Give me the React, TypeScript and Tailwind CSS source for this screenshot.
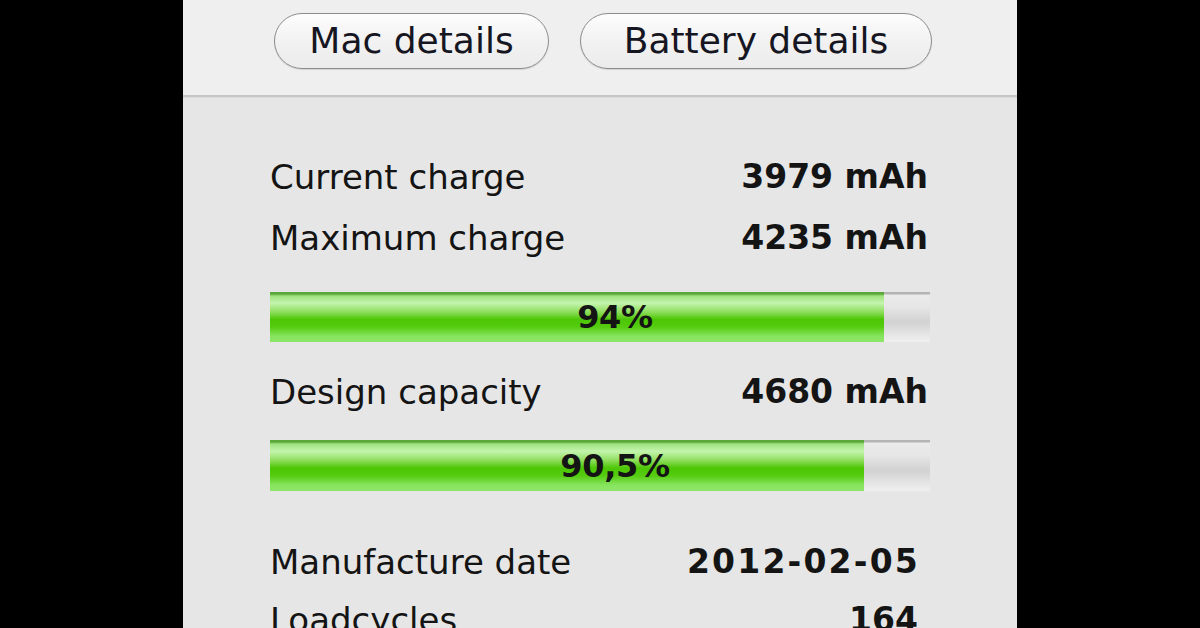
import React from "react";

const font = { fontFamily: '"DejaVu Sans", "Liberation Sans", sans-serif' };

function Row({ label, value, pr = "pr-0", mt, vcls = "" }: { label: string; value: string; pr?: string; mt: string; vcls?: string }) {
  return (
    <div className={`flex items-center justify-between h-[40px] leading-[40px] text-[#141414] ${pr} ${mt}`}>
      <span className="text-[34px]">{label}</span>
      <span className={`text-[33px] font-bold ${vcls}`}>{value}</span>
    </div>
  );
}

function Bar({ pct, label, mt, h }: { pct: number; label: string; mt: string; h: string }) {
  return (
    <div className={`relative w-[660px] ${h} ${mt} bg-[linear-gradient(to_bottom,#b4b4b4_0px,#b4b4b4_2px,#ebebeb_3px,#e6e6e6_30%,#d2d2d2_60%,#e9e9e9_90%,#efefef_100%)]`}>
      <div
        className="absolute left-0 top-0 bottom-0 bg-[linear-gradient(to_bottom,#5aa83a_0px,#5aa83a_2px,#9fe27e_4px,#c4f4ae_22%,#8ede5c_40%,#4cc604_55%,#55cc10_70%,#86e45e_88%,#8fe66a_100%)]"
        style={{ width: `${pct}%` }}
      />
      <div className="absolute inset-0 pl-[30px] flex items-center justify-center text-[32px] font-bold text-[#141414] leading-none tracking-[-0.3px]">
        {label}
      </div>
    </div>
  );
}

export default function App() {
  return (
    <div className="w-[1200px] h-[628px] bg-black overflow-hidden" style={font}>
      <div className="mx-auto w-[834px] h-full bg-[#e6e6e6] flex flex-col overflow-hidden">
        <div className="shrink-0 h-[95px] bg-[#efefef] flex justify-center gap-[31px] pt-[13px] pl-[6px]">
          <button className="h-[56px] w-[275px] rounded-full border-[1.5px] border-[#8c8c8c] bg-[linear-gradient(to_bottom,#fdfdfd,#f1f1f1_55%,#ececec)] shadow-[0_1px_1px_rgba(0,0,0,0.12)] text-[36px] text-[#161622] leading-none">
            Mac details
          </button>
          <button className="h-[56px] w-[352px] rounded-full border-[1.5px] border-[#8c8c8c] bg-[linear-gradient(to_bottom,#fdfdfd,#f1f1f1_55%,#ececec)] shadow-[0_1px_1px_rgba(0,0,0,0.12)] text-[36px] text-[#161622] leading-none">
            Battery details
          </button>
        </div>
        <div className="shrink-0 h-[2px] bg-[#c6c6c6]" />
        <div className="shrink-0 h-[1px] bg-[#dcdcdc]" />
        <div className="shrink-0 pl-[87px] pr-[89px] pt-[59px]">
          <Row label="Current charge" value="3979 mAh" mt="mt-0" />
          <Row label="Maximum charge" value="4235 mAh" mt="mt-[21px]" />
          <Bar pct={93} label="94%" mt="mt-[34px]" h="h-[50px]" />
          <Row label="Design capacity" value="4680 mAh" mt="mt-[30px]" />
          <Bar pct={90} label="90,5%" mt="mt-[28px]" h="h-[51px]" />
          <Row label="Manufacture date" value="2012-02-05" pr="pr-[8px]" mt="mt-[51px]" vcls="tracking-[2.2px]" />
          <Row label="Loadcycles" value="164" pr="pr-[10px]" mt="mt-[18px]" />
        </div>
      </div>
    </div>
  );
}
